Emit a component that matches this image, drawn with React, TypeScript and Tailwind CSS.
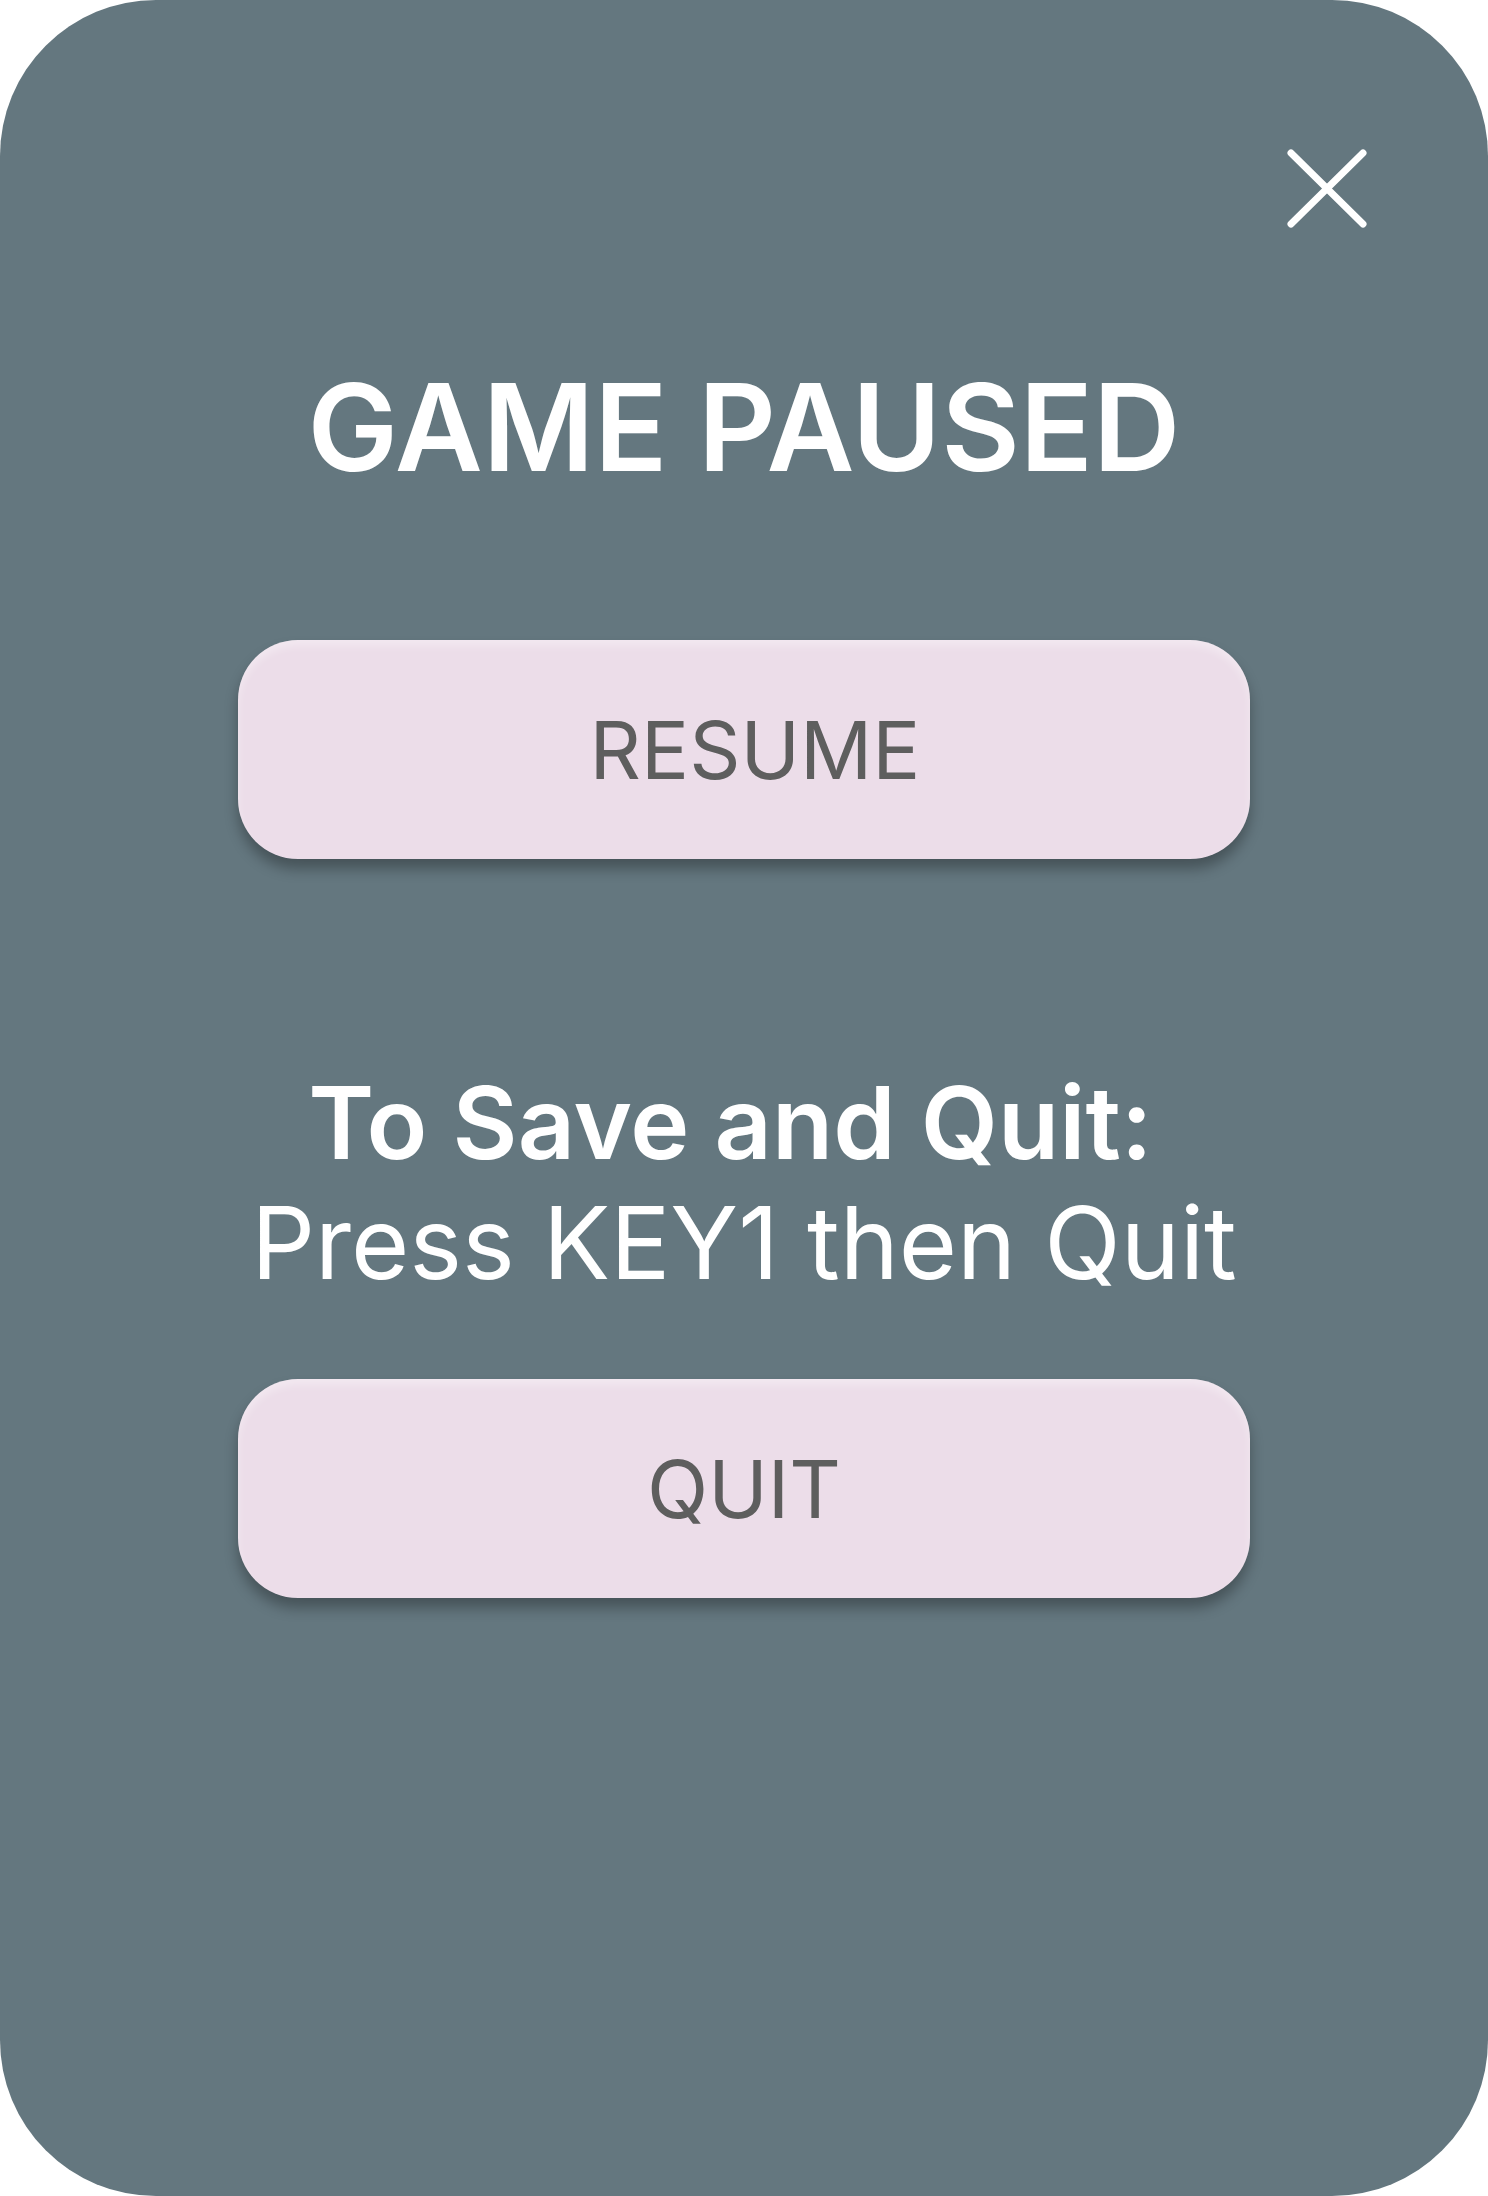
import React from 'react';

const PauseButton: React.FC<{ label: string; offset?: string }> = ({ label, offset = '' }) => (
  <button className={`w-[1012px] h-[219px] rounded-[60px] bg-[#ecdde9] shadow-[inset_0_6px_8px_rgba(255,255,255,0.35),0_10px_14px_rgba(0,0,0,0.3)] flex items-center justify-center text-[80px] leading-none font-normal text-[#5e5e5e] ${offset}`}>
    {label}
  </button>
);

const App: React.FC = () => {
  return (
    <div className="w-[1488px] h-[2196px] bg-white" style={{ fontFamily: 'Inter, "Noto Sans", sans-serif' }}>
      <div className="relative w-full h-full rounded-[156px] bg-[#64777f] flex flex-col items-center">
        {/* Close */}
        <button className="absolute top-[149px] right-[121px] w-[80px] h-[80px]" aria-label="Close">
          <svg viewBox="0 0 80 80" width="80" height="80" fill="none" stroke="white" strokeWidth="7" strokeLinecap="round">
            <line x1="4" y1="4" x2="76" y2="75" />
            <line x1="76" y1="4" x2="4" y2="75" />
          </svg>
        </button>

        <h1 className="mt-[355px] text-[121px] leading-[1.2] font-semibold text-white">GAME PAUSED</h1>

        <div className="mt-[140px]">
          <PauseButton label="RESUME" offset="pl-[22px]" />
        </div>

        <div className="mt-[204px] text-center text-white text-[100px] leading-[120px]">
          <p className="font-semibold pr-[27px]">To Save and Quit:</p>
          <p className="font-normal">Press KEY1 then Quit</p>
        </div>

        <div className="mt-[76px]">
          <PauseButton label="QUIT" />
        </div>
      </div>
    </div>
  );
};

export default App;
